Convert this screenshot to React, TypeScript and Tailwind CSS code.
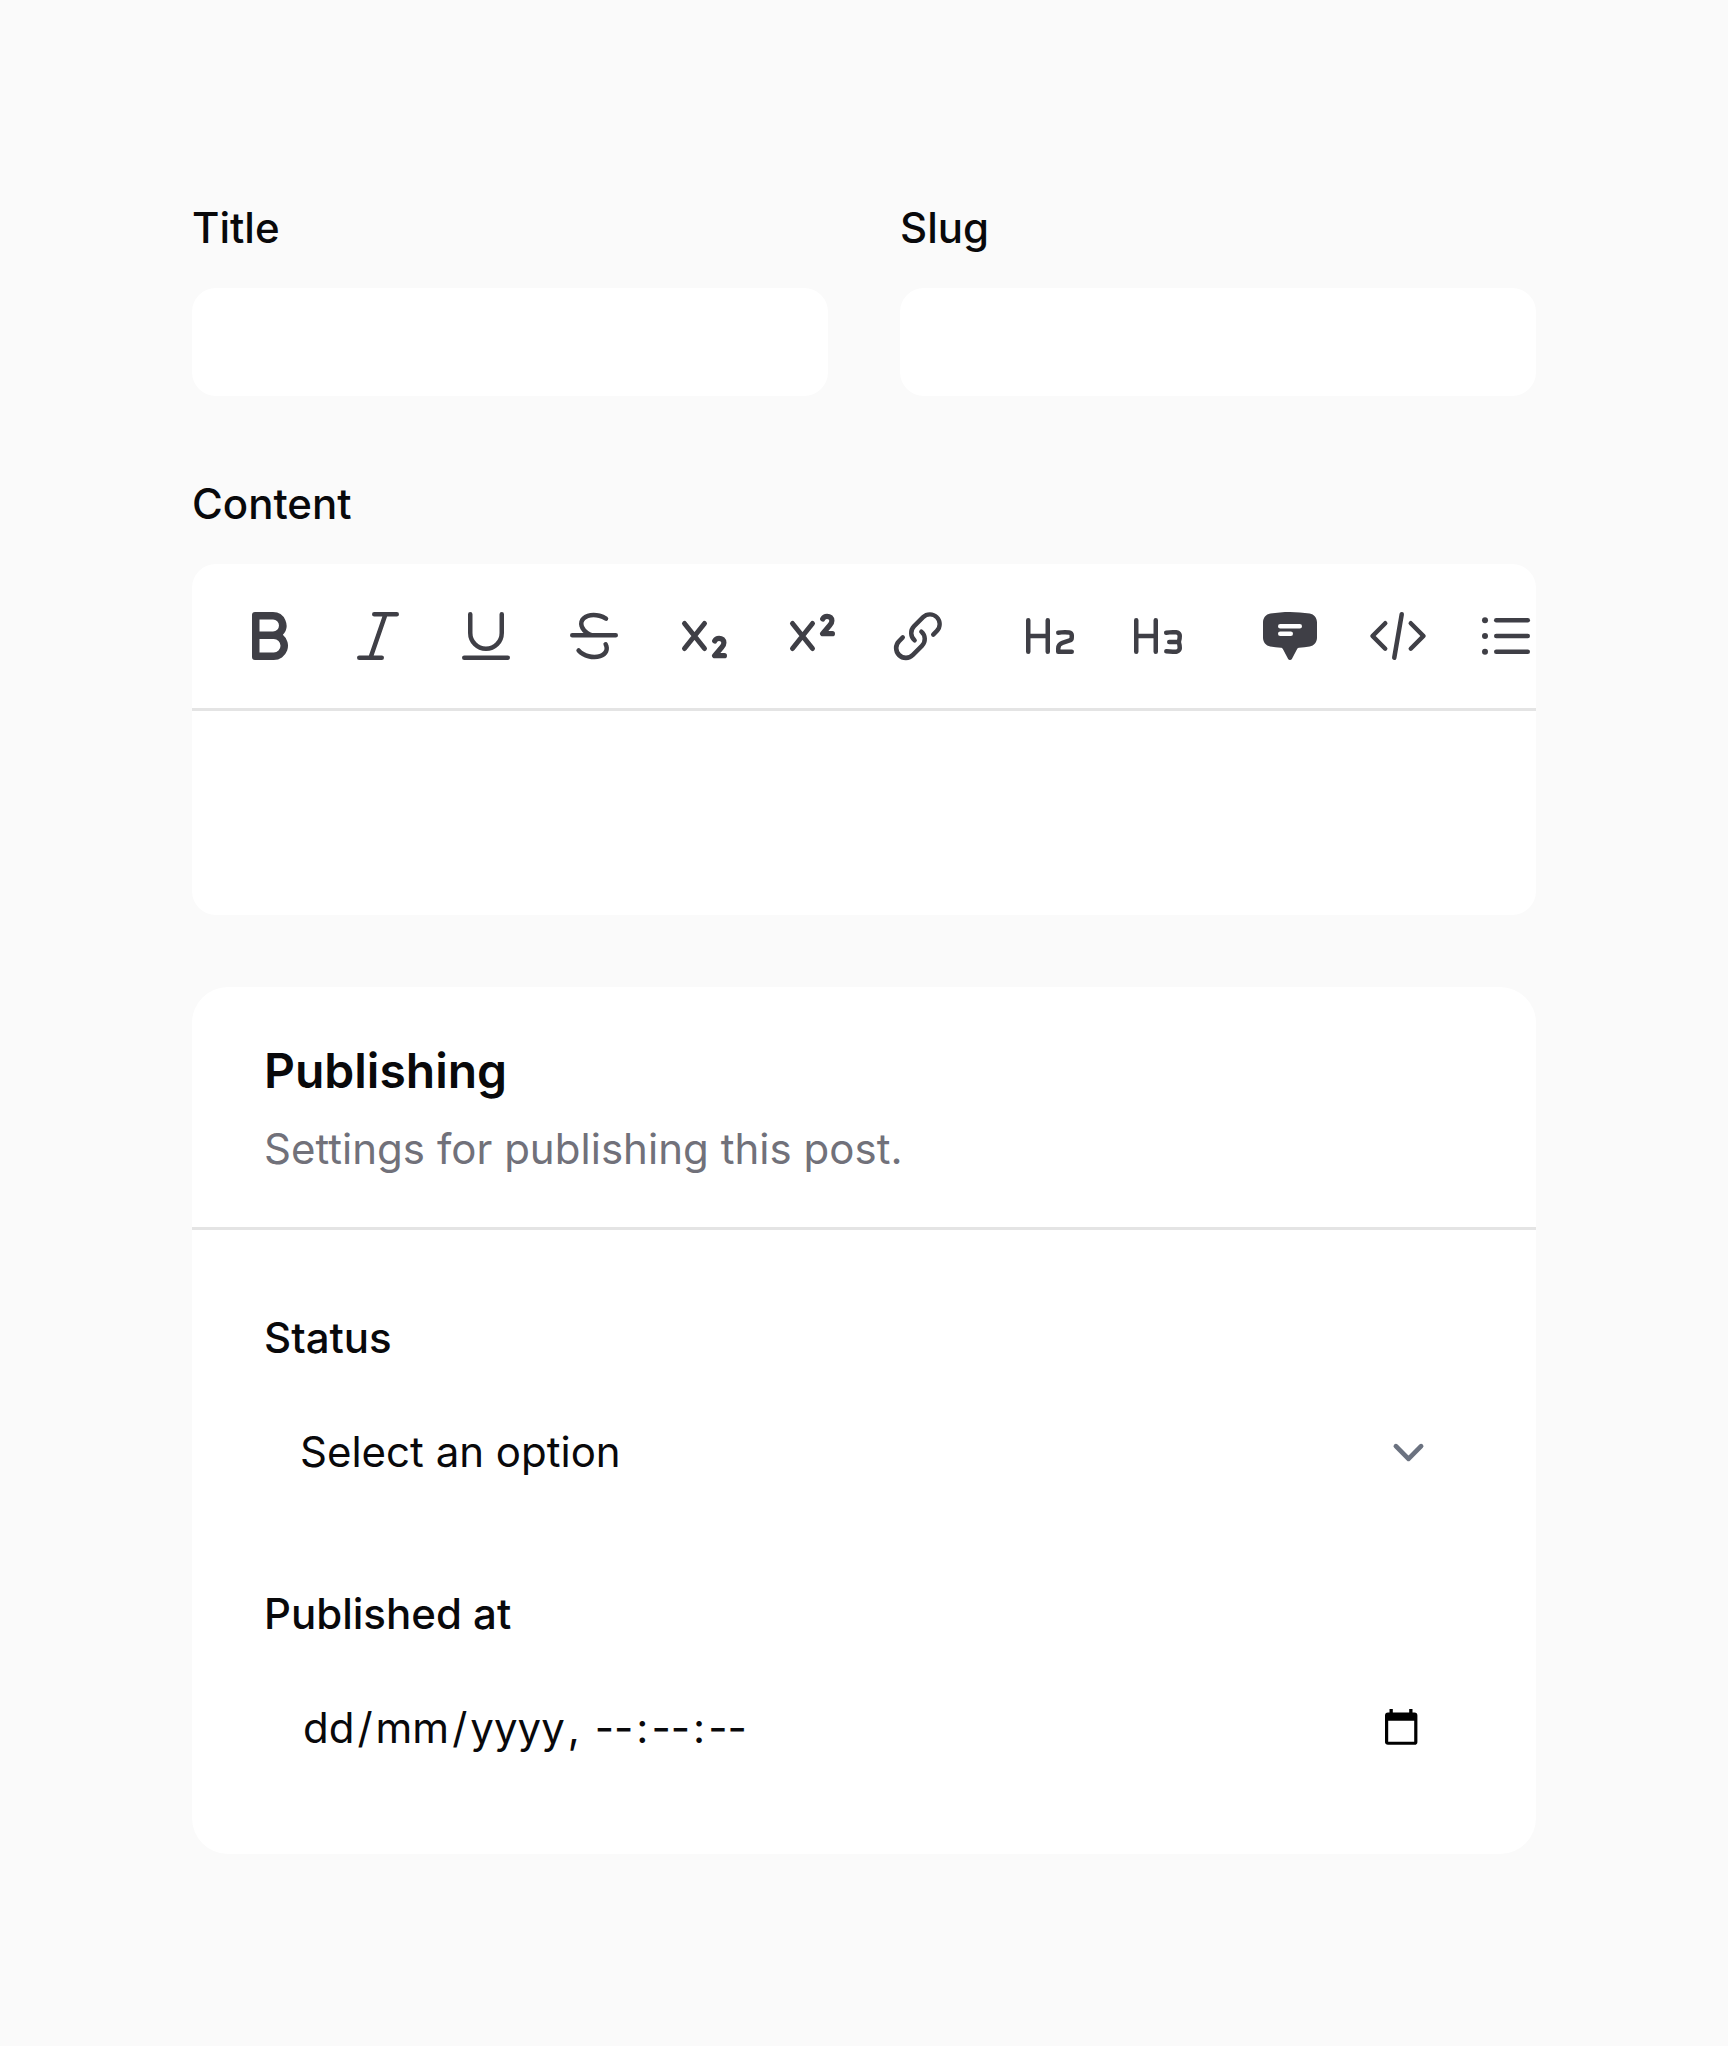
import type { ReactNode } from "react";

const Glyph = ({ children }: { children: ReactNode }) => (
  <svg viewBox="0 0 20 20" fill="currentColor" fillRule="evenodd" clipRule="evenodd" className="size-[60px]">
    {children}
  </svg>
);

const Script = ({ up }: { up?: boolean }) => (
  <svg viewBox="0 0 60 60" fill="none" stroke="currentColor" strokeLinecap="round" strokeLinejoin="round" className="size-[60px]">
    <path strokeWidth="5" d="M12.5 17.5 32.5 42.5M32.5 17.5 12.5 42.5" />
    <path
      strokeWidth="5.2"
      transform={up ? "translate(0 -22)" : undefined}
      d="M42.7 35c.9-1.8 2.5-2.7 4.4-2.7 2.9 0 4.8 1.8 4.8 4.4 0 1.8-.8 3.1-2.1 4.6L42.6 49.7H52.4"
    />
  </svg>
);

const H = "M2.75 4a.75.75 0 0 1 .75.75v4.5h5v-4.5a.75.75 0 0 1 1.5 0v10.5a.75.75 0 0 1-1.5 0v-4.5h-5v4.5a.75.75 0 0 1-1.5 0V4.75A.75.75 0 0 1 2.75 4Z";

const groups: { name: string; icon: ReactNode }[][] = [
  [
    {
      name: "Bold",
      icon: (
        <Glyph>
          <path d="M4 3a1 1 0 0 1 1-1h6a4.5 4.5 0 0 1 3.274 7.587A4.75 4.75 0 0 1 11.25 18H5a1 1 0 0 1-1-1V3Zm2.5 5.5v-4H11a2 2 0 1 1 0 4H6.5Zm0 2.5v4.5h4.75a2.25 2.25 0 0 0 0-4.5H6.5Z" />
        </Glyph>
      ),
    },
    {
      name: "Italic",
      icon: (
        <Glyph>
          <path d="M8 2.75A.75.75 0 0 1 8.75 2h7.5a.75.75 0 0 1 0 1.5h-3.215l-4.483 13h2.698a.75.75 0 0 1 0 1.5h-7.5a.75.75 0 0 1 0-1.5h3.215l4.483-13H8.75A.75.75 0 0 1 8 2.75Z" />
        </Glyph>
      ),
    },
    {
      name: "Underline",
      icon: (
        <Glyph>
          <path d="M4.75 2a.75.75 0 0 1 .75.75V9a4.5 4.5 0 1 0 9 0V2.75a.75.75 0 0 1 1.5 0V9A6 6 0 0 1 4 9V2.75A.75.75 0 0 1 4.75 2ZM2 17.25a.75.75 0 0 1 .75-.75h14.5a.75.75 0 0 1 0 1.5H2.75a.75.75 0 0 1-.75-.75Z" />
        </Glyph>
      ),
    },
    {
      name: "Strikethrough",
      icon: (
        <Glyph>
          <path d="M11.617 3.963c-1.186-.318-2.418-.323-3.416.015-.992.336-1.49.91-1.642 1.476-.152.566-.007 1.313.684 2.1.528.6 1.273 1.1 2.128 1.446h7.879a.75.75 0 0 1 0 1.5H2.75a.75.75 0 0 1 0-1.5h3.813a5.976 5.976 0 0 1-.447-.456C5.18 7.479 4.798 6.231 5.11 5.066c.312-1.164 1.268-2.055 2.61-2.509 1.336-.451 2.877-.42 4.286-.043.856.23 1.684.592 2.409 1.074a.75.75 0 1 1-.83 1.25 6.723 6.723 0 0 0-1.968-.875Zm1.909 8.123a.75.75 0 0 1 1.015.309c.53.99.607 2.062.18 3.01-.421.94-1.289 1.648-2.441 2.038-1.336.452-2.877.42-4.286.043-1.409-.377-2.759-1.121-3.69-2.18a.75.75 0 1 1 1.127-.99c.696.791 1.765 1.403 2.952 1.721 1.186.318 2.418.323 3.416-.015.853-.288 1.34-.756 1.555-1.232.21-.467.205-1.049-.136-1.69a.75.75 0 0 1 .308-1.014Z" />
        </Glyph>
      ),
    },
    { name: "Subscript", icon: <Script /> },
    { name: "Superscript", icon: <Script up /> },
    {
      name: "Link",
      icon: (
        <Glyph>
          <path d="M12.232 4.232a2.5 2.5 0 0 1 3.536 3.536l-1.225 1.224a.75.75 0 0 0 1.061 1.06l1.224-1.224a4 4 0 0 0-5.656-5.656l-3 3a4 4 0 0 0 .225 5.865.75.75 0 0 0 .977-1.138 2.5 2.5 0 0 1-.142-3.667l3-3Z" />
          <path d="M11.603 7.963a.75.75 0 0 0-.977 1.138 2.5 2.5 0 0 1 .142 3.667l-3 3a2.5 2.5 0 0 1-3.536-3.536l1.225-1.224a.75.75 0 0 0-1.061-1.06l-1.224 1.224a4 4 0 1 0 5.656 5.656l3-3a4 4 0 0 0-.225-5.865Z" />
        </Glyph>
      ),
    },
  ],
  [
    {
      name: "Heading 2",
      icon: (
        <Glyph>
          <path d={H} />
          <path d="M15 9.5c-.729 0-1.445.051-2.146.15a.75.75 0 0 1-.208-1.486 16.887 16.887 0 0 1 3.824-.1c.855.074 1.512.78 1.527 1.637a17.476 17.476 0 0 1-.009.931 1.713 1.713 0 0 1-1.18 1.556l-2.453.818a1.25 1.25 0 0 0-.855 1.185v.309h3.75a.75.75 0 0 1 0 1.5h-4.5a.75.75 0 0 1-.75-.75v-1.059a2.75 2.75 0 0 1 1.88-2.608l2.454-.818c.102-.034.153-.117.155-.188a15.556 15.556 0 0 0 .009-.85.171.171 0 0 0-.158-.169A15.458 15.458 0 0 0 15 9.5Z" />
        </Glyph>
      ),
    },
    {
      name: "Heading 3",
      icon: (
        <Glyph>
          <path d={H} />
          <path d="M15 9.5c-.73 0-1.448.051-2.15.15a.75.75 0 1 1-.209-1.485 16.886 16.886 0 0 1 3.476-.128c.985.065 1.878.837 1.883 1.932V10a6.75 6.75 0 0 1-.301 2A6.75 6.75 0 0 1 18 14v.031c-.005 1.095-.898 1.867-1.883 1.932a17.018 17.018 0 0 1-3.467-.127.75.75 0 0 1 .209-1.485 15.377 15.377 0 0 0 3.16.115c.308-.02.48-.24.48-.441L16.5 14c0-.431-.052-.85-.15-1.25h-2.6a.75.75 0 0 1 0-1.5h2.6c.098-.4.15-.818.15-1.25v-.024c-.001-.201-.173-.422-.481-.443A15.485 15.485 0 0 0 15 9.5Z" />
        </Glyph>
      ),
    },
  ],
  [
    {
      name: "Blockquote",
      icon: (
        <Glyph>
          <path d="M10 2c-2.236 0-4.43.18-6.57.524C1.993 2.755 1 4.014 1 5.426v5.148c0 1.413.993 2.67 2.43 2.902 1.168.188 2.352.327 3.55.414.28.02.521.18.642.413l1.713 3.293a.75.75 0 0 0 1.33 0l1.713-3.293a.783.783 0 0 1 .642-.413 41.102 41.102 0 0 0 3.55-.414c1.437-.231 2.43-1.49 2.43-2.902V5.426c0-1.413-.993-2.67-2.43-2.902A41.289 41.289 0 0 0 10 2ZM6.75 6a.75.75 0 0 0 0 1.5h6.5a.75.75 0 0 0 0-1.5h-6.5Zm0 2.5a.75.75 0 0 0 0 1.5h3.5a.75.75 0 0 0 0-1.5h-3.5Z" />
        </Glyph>
      ),
    },
    {
      name: "Code block",
      icon: (
        <Glyph>
          <path d="M6.28 5.22a.75.75 0 0 1 0 1.06L2.56 10l3.72 3.72a.75.75 0 0 1-1.06 1.06L.97 10.53a.75.75 0 0 1 0-1.06l4.25-4.25a.75.75 0 0 1 1.06 0Zm7.44 0a.75.75 0 0 1 1.06 0l4.25 4.25a.75.75 0 0 1 0 1.06l-4.25 4.25a.75.75 0 0 1-1.06-1.06L17.44 10l-3.72-3.72a.75.75 0 0 1 0-1.06ZM11.377 2.011a.75.75 0 0 1 .612.867l-2.5 14.5a.75.75 0 0 1-1.478-.255l2.5-14.5a.75.75 0 0 1 .866-.612Z" />
        </Glyph>
      ),
    },
    {
      name: "Bullet list",
      icon: (
        <Glyph>
          <rect x="6" y="4" width="12" height="1.5" rx="0.75" />
          <rect x="6" y="9.25" width="12" height="1.5" rx="0.75" />
          <rect x="6" y="14.5" width="12" height="1.5" rx="0.75" />
          <circle cx="3" cy="4.75" r="1" />
          <circle cx="3" cy="10" r="1" />
          <circle cx="3" cy="15.25" r="1" />
        </Glyph>
      ),
    },
  ],
];

const Field = ({ label, children }: { label: string; children: ReactNode }) => (
  <div className="flex flex-col gap-6">
    <div className="text-[42px] leading-[72px] font-medium">{label}</div>
    {children}
  </div>
);

const dateParts = ["dd", "/", "mm", "/", "yyyy", ", ", "--", ":", "--", ":", "--"];

export default function App() {
  return (
    <main className="flex h-[2046px] w-[1728px] flex-col gap-[72px] overflow-hidden bg-[#fafafa] p-48 font-['Inter',sans-serif] text-[#09090b]">
      <div className="grid grid-cols-2 gap-[72px]">
        <Field label="Title">
          <div className="h-[108px] rounded-3xl bg-white" />
        </Field>
        <Field label="Slug">
          <div className="h-[108px] rounded-3xl bg-white" />
        </Field>
      </div>

      <Field label="Content">
        <div className="overflow-hidden rounded-3xl bg-white">
          <div className="flex h-[147px] gap-9 border-b-[3px] border-[#e4e4e4] px-[30px] py-6 text-[#3f3f46]">
            {groups.map((group, i) => (
              <div key={i} className="flex shrink-0 gap-3">
                {group.map(({ name, icon }) => (
                  <button key={name} aria-label={name} className="flex size-24 shrink-0 items-center justify-center">
                    {icon}
                  </button>
                ))}
              </div>
            ))}
          </div>
          <div className="h-[204px]" />
        </div>
      </Field>

      <section className="rounded-[36px] bg-white">
        <header className="flex flex-col gap-3 border-b-[3px] border-[#e4e4e4] px-[72px] py-12">
          <h2 className="text-[48px] leading-[72px] font-semibold">Publishing</h2>
          <p className="text-[42px] leading-[60px] tracking-[0.03px] text-[#71717a]">Settings for publishing this post.</p>
        </header>
        <div className="flex flex-col gap-[72px] p-[72px]">
          <Field label="Status">
            <div className="flex h-[108px] items-center justify-between pr-6 pl-9 text-[42px] leading-[72px]">
              <span>Select an option</span>
              <svg viewBox="0 0 20 20" className="size-[63px]" fill="none" stroke="#6b7280" strokeWidth="1.5" strokeLinecap="round" strokeLinejoin="round">
                <path d="m6 8 4 4 4-4" />
              </svg>
            </div>
          </Field>
          <Field label="Published at">
            <div className="flex h-[108px] items-center justify-between pr-[46px] pl-9 text-[42px] leading-[72px]">
              <div className="flex whitespace-pre">
                {dateParts.map((part, i) => (
                  <span key={i} className={i % 2 === 0 ? "px-[3px]" : ""}>
                    {part}
                  </span>
                ))}
              </div>
              <svg viewBox="0 0 33 36" className="mb-[3px] h-9 w-[33px]" fill="#000" fillRule="evenodd">
                <path d="M4.5 0H7.8V3.5H24.2V0H27.5V3.5H29.5A3 3 0 0 1 32.4 6.5V32.5A3 3 0 0 1 29.4 35.7H3A3 3 0 0 1 0 32.5V6.5A3 3 0 0 1 3 3.5H4.5ZM3.2 11.7V32.7H29.2V11.7Z" />
              </svg>
            </div>
          </Field>
        </div>
      </section>
    </main>
  );
}
